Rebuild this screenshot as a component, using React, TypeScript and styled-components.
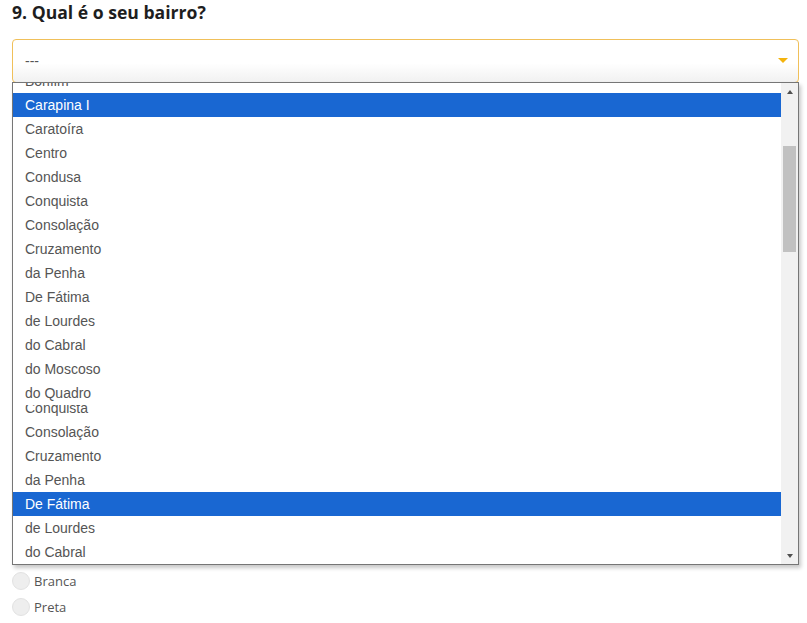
import React from 'react';
import styled, { createGlobalStyle } from 'styled-components';

const GlobalStyle = createGlobalStyle`
  html, body { margin: 0; padding: 0; background: #fff; }
  body { font-family: "Open Sans", "Noto Sans", sans-serif; }
`;

const Page = styled.div`
  width: 787px;
  padding: 0 8px 0 12px;
`;

const Question = styled.h2<{ $mt?: number; $mb?: number }>`
  margin: ${(p) => p.$mt ?? 0}px 0 ${(p) => p.$mb ?? 15}px;
  font-family: "Open Sans", "Noto Sans", sans-serif;
  font-size: 17.6px;
  font-weight: 700;
  line-height: 24px;
  color: #1e1e1e;
`;

const SelectWrap = styled.div`
  position: relative;
`;

const SelectBox = styled.div`
  box-sizing: border-box;
  height: 44px;
  display: flex;
  align-items: center;
  justify-content: space-between;
  padding: 0 10px 0 12px;
  border: 1px solid #f0c05a;
  border-radius: 4px;
  background: linear-gradient(#fff 55%, #f1f1f1);
  font-family: "Liberation Sans", Arial, sans-serif;
  font-size: 14px;
  color: #555;
`;

const Caret = styled.span`
  width: 0;
  height: 0;
  margin-top: -1px;
  border-left: 5px solid transparent;
  border-right: 5px solid transparent;
  border-top: 5.5px solid #f4b30c;
`;

const Dropdown = styled.div`
  position: absolute;
  top: 43px;
  left: 0;
  z-index: 10;
  box-sizing: border-box;
  width: 787px;
  height: 483px;
  display: flex;
  border: 1px solid #767676;
  background: #fff;
  box-shadow: 2px 3px 4px rgba(0, 0, 0, 0.22);
`;

const ListArea = styled.div`
  flex: 1;
  display: flex;
  flex-direction: column;
`;

const Segment = styled.div<{ $h: number }>`
  flex: none;
  height: ${(p) => p.$h}px;
  overflow: hidden;
`;

const Options = styled.div<{ $offset: number }>`
  margin-top: ${(p) => p.$offset}px;
`;

const Option = styled.div<{ $selected?: boolean }>`
  height: 24px;
  line-height: 24px;
  padding-left: 12px;
  font-family: "Liberation Sans", Arial, sans-serif;
  font-size: 14px;
  white-space: nowrap;
  color: ${(p) => (p.$selected ? '#fff' : '#555')};
  background: ${(p) => (p.$selected ? '#1967d2' : 'transparent')};
`;

const Scrollbar = styled.div`
  flex: none;
  width: 17px;
  display: flex;
  flex-direction: column;
  background: #f1f1f1;
`;

const ScrollBtn = styled.div`
  flex: none;
  height: 17px;
  display: flex;
  align-items: center;
  justify-content: center;
`;

const ArrowUp = styled.span`
  width: 0;
  height: 0;
  border-left: 3.5px solid transparent;
  border-right: 3.5px solid transparent;
  border-bottom: 4px solid #505050;
`;

const ArrowDown = styled.span`
  width: 0;
  height: 0;
  border-left: 3.5px solid transparent;
  border-right: 3.5px solid transparent;
  border-top: 4px solid #505050;
`;

const Track = styled.div`
  flex: 1;
`;

const Thumb = styled.div`
  height: 106px;
  margin: 46px 2px 0 2px;
  background: #c1c1c1;
`;

const RadioList = styled.div`
  display: flex;
  flex-direction: column;
`;

const RadioRow = styled.label`
  height: 26px;
  display: flex;
  align-items: center;
  gap: 4px;
`;

const RadioCircle = styled.span`
  box-sizing: border-box;
  width: 18px;
  height: 18px;
  border-radius: 50%;
  background: #eeeeee;
  border: 1px solid #e2e2e2;
`;

const RadioLabel = styled.span`
  font-family: "Open Sans", "Noto Sans", sans-serif;
  font-size: 13px;
  color: #555;
`;

const bairros = [
  'Bonfim',
  'Carapina I',
  'Caratoíra',
  'Centro',
  'Condusa',
  'Conquista',
  'Consolação',
  'Cruzamento',
  'da Penha',
  'De Fátima',
  'de Lourdes',
  'do Cabral',
  'do Moscoso',
  'do Quadro',
  'do Romão',
];

const segments = [
  { height: 322, offset: -14, selected: 'Carapina I' },
  { height: 159, offset: -9 - 5 * 24, selected: 'De Fátima' },
];

export default function App() {
  return (
    <>
      <GlobalStyle />
      <Page>
        <Question>9. Qual é o seu bairro?</Question>
        <SelectWrap>
          <SelectBox>
            <span>---</span>
            <Caret />
          </SelectBox>
          <Dropdown>
            <ListArea>
              {segments.map((s, i) => (
                <Segment key={i} $h={s.height}>
                  <Options $offset={s.offset}>
                    {bairros.map((b) => (
                      <Option key={b} $selected={b === s.selected}>
                        {b}
                      </Option>
                    ))}
                  </Options>
                </Segment>
              ))}
            </ListArea>
            <Scrollbar>
              <ScrollBtn>
                <ArrowUp />
              </ScrollBtn>
              <Track>
                <Thumb />
              </Track>
              <ScrollBtn>
                <ArrowDown />
              </ScrollBtn>
            </Scrollbar>
          </Dropdown>
        </SelectWrap>
        <Question $mt={437} $mb={24}>10. Qual é a sua cor ou raça?</Question>
        <RadioList>
          {['Branca', 'Preta', 'Parda', 'Amarela', 'Indígena'].map((r) => (
            <RadioRow key={r}>
              <RadioCircle />
              <RadioLabel>{r}</RadioLabel>
            </RadioRow>
          ))}
        </RadioList>
      </Page>
    </>
  );
}
